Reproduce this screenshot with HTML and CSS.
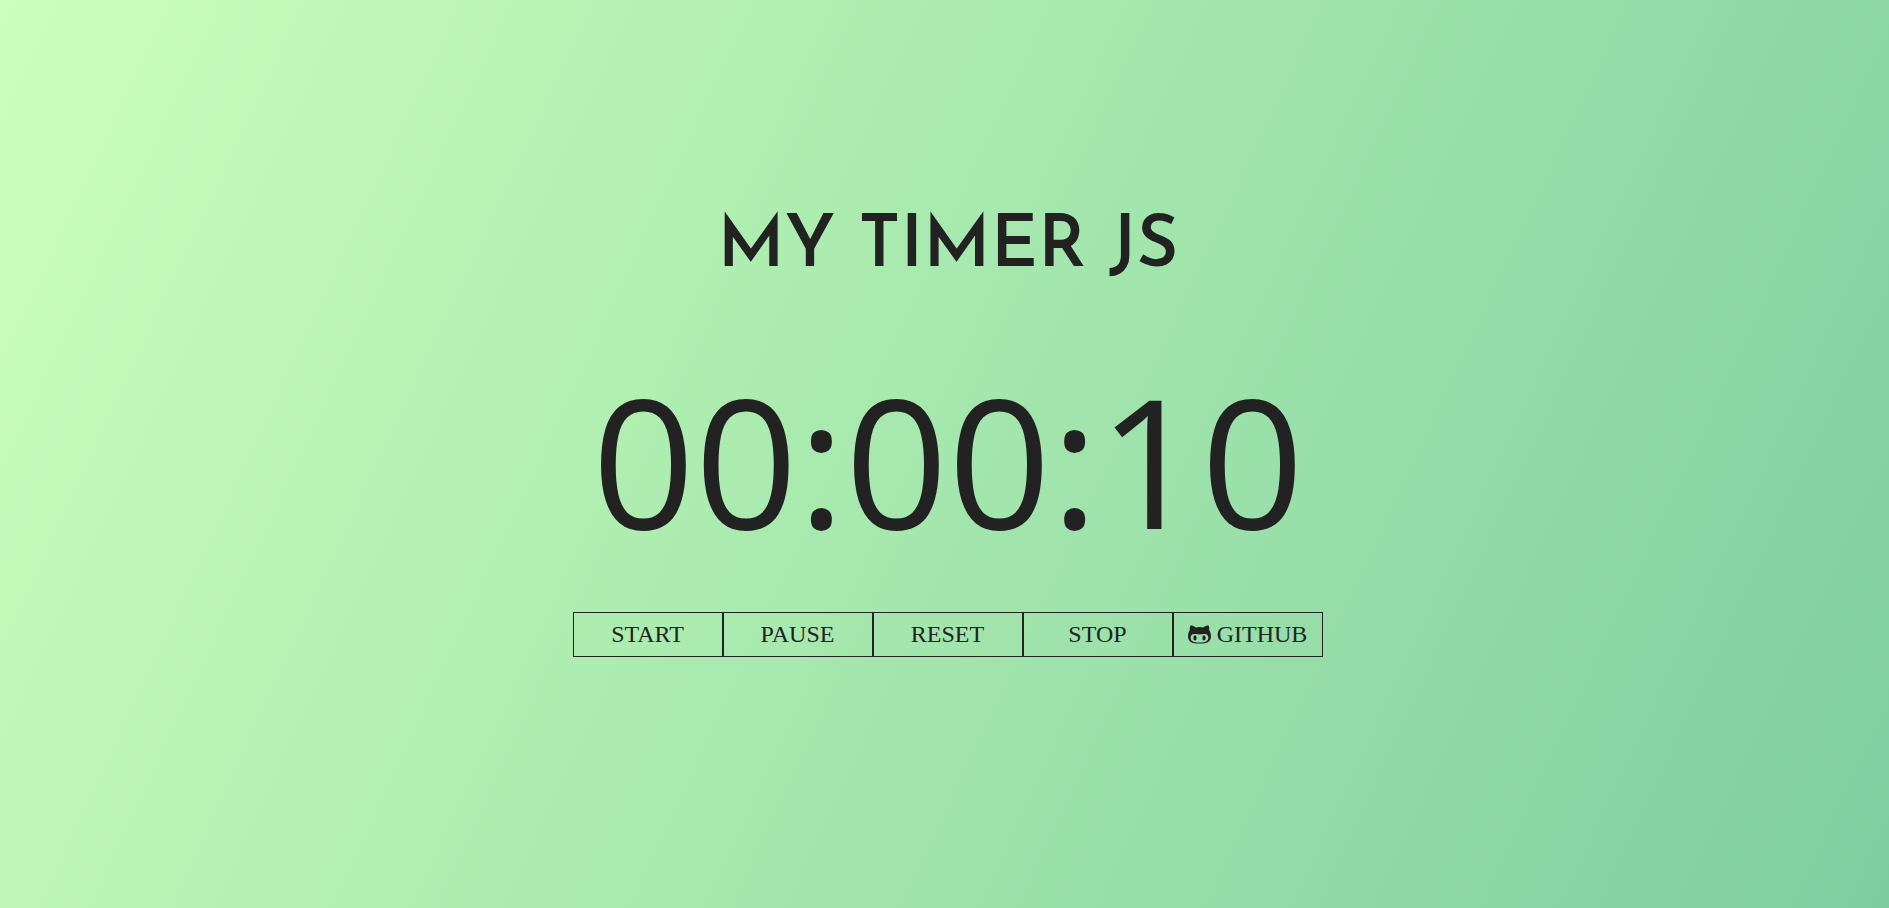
FILE: index.html
```html
<!DOCTYPE html>
<html lang="en">
<head>
<meta charset="utf-8">
<title>My Timer JS</title>
<meta name="viewport" content="width=device-width, initial-scale=1">
<link rel="stylesheet" href="styles.css">
</head>
<body>
<main class="app">
  <h1 class="title">MY TIMER JS</h1>
  <div class="timer" role="timer">00:00:10</div>
  <div class="actions">
    <button class="action" type="button">START</button>
    <button class="action" type="button">PAUSE</button>
    <button class="action" type="button">RESET</button>
    <button class="action" type="button">STOP</button>
    <a class="action" href="#github">
      <svg class="icon" viewBox="0 0 24 24" aria-hidden="true">
        <path fill="currentColor" fill-rule="evenodd" d="M2.300 2.800C4 2.500 6 3.200 8 4.600Q12 4 16 4.600C18 3.200 20 2.500 21.700 2.800Q22.500 5 22 7.300Q24 9.500 24 13C24 19.500 20.500 21.500 12 21.500S0 19.500 0 13Q0 9.500 2 7.300Q1.500 5 2.300 2.800ZM6.500 11.500C4 11.500 2.800 13.200 2.800 15.400C2.800 19.200 6 20.300 12 20.300S21.200 19.200 21.200 15.400C21.200 13.200 20 11.500 17.500 11.500C15.500 11.500 14.500 11.900 12 11.900S8.500 11.500 6.500 11.500Z"/>
        <ellipse fill="currentColor" cx="7.300" cy="15.600" rx="1.700" ry="2.700"/>
        <ellipse fill="currentColor" cx="16.700" cy="15.600" rx="1.700" ry="2.700"/>
      </svg>
      GITHUB
    </a>
  </div>
</main>
</body>
</html>
```
FILE: styles.css
```css
* {
  box-sizing: border-box;
}

body {
  margin: 0;
  color: #222;
  background: linear-gradient(115deg, #ccffbb 0%, #a6e8ae 48%, #7fcd9f 100%);
}

.app {
  display: flex;
  flex-direction: column;
  align-items: center;
  min-height: 100vh;
  padding: 200px 0 32px 7px;
}

.title {
  margin: 0;
  font: 600 72px/96px "Josefin Sans", Lato, sans-serif;
}

.timer {
  margin-top: 44px;
  font: 400 180px/240px "Segoe UI", "Open Sans", sans-serif;
}

.actions {
  display: flex;
  flex-wrap: wrap;
  justify-content: center;
  margin-top: 32px;
}

.action {
  display: flex;
  align-items: center;
  justify-content: center;
  gap: 6px;
  width: 150px;
  height: 45px;
  padding: 0 1px 2px 0;
  border: 1px solid #222;
  background: transparent;
  color: #222;
  font: 24px/28px "Liberation Serif", "Times New Roman", serif;
  text-decoration: none;
  cursor: pointer;
}

.icon {
  width: 23px;
  height: 23px;
  margin-top: 2px;
}
```
